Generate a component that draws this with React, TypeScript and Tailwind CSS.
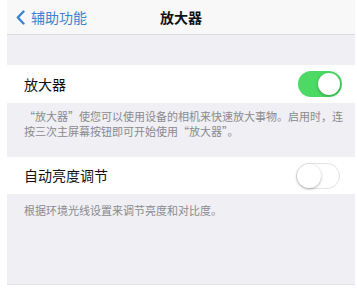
import React from "react";

const font = { fontFamily: '"Noto Sans CJK SC", "Noto Sans", sans-serif' };

const Toggle = ({ on }: { on: boolean }) =>
  on ? (
    <div className="w-[44px] h-[26px] rounded-full bg-[#4cd964] relative">
      <div className="absolute right-[2px] top-[2px] w-[22px] h-[22px] rounded-full bg-white shadow-[0_1px_3px_rgba(0,0,0,0.3)]" />
    </div>
  ) : (
    <div className="w-[44px] h-[26px] rounded-full bg-white border border-[#e3e3e6] relative">
      <div className="absolute left-0 top-0 w-[24px] h-[24px] rounded-full bg-white shadow-[0_1px_3px_rgba(0,0,0,0.3)]" />
    </div>
  );

export default function App() {
  return (
    <div className="w-[357px] h-[289px] bg-white pl-[7px] pr-[2px] pb-[4px]" style={font}>
      <div className="h-full flex flex-col bg-[#efeff4]">
        <div className="relative h-[35px] shrink-0 bg-[#f8f8f8] border-b border-[#dcdce0] flex items-center justify-center">
          <div className="absolute left-[9px] top-0 h-full flex items-center gap-[6px] text-[#3a84d2]">
            <svg width="9" height="15" viewBox="0 0 9 15">
              <path d="M7.5 1.5 L1.8 7.5 L7.5 13.5" fill="none" stroke="currentColor" strokeWidth="2.4" strokeLinecap="round" strokeLinejoin="round" />
            </svg>
            <span className="text-[14px] leading-none">辅助功能</span>
          </div>
          <span className="text-[14px] font-bold text-[#111] leading-none">放大器</span>
        </div>

        <div className="h-[30px] shrink-0" />

        <div className="h-[38px] shrink-0 bg-white flex items-center justify-between pl-[17px] pr-[13px]">
          <span className="text-[14px] text-[#111]">放大器</span>
          <Toggle on />
        </div>

        <div className="h-[54px] shrink-0 pl-[17px] pr-[10px] pt-[6px] text-[11px] leading-[15px] text-[#8a8a8f] whitespace-nowrap">
          “放大器”使您可以使用设备的相机来快速放大事物。启用时，连
          <br />
          按三次主屏幕按钮即可开始使用“放大器”。
        </div>

        <div className="h-[37px] shrink-0 bg-white flex items-center justify-between pl-[17px] pr-[15px]">
          <span className="text-[14px] text-[#111]">自动亮度调节</span>
          <Toggle on={false} />
        </div>

        <div className="flex-1 pl-[17px] pt-[9px] text-[11px] leading-[15px] text-[#8a8a8f] border-b border-[#e2e2e6]">
          根据环境光线设置来调节亮度和对比度。
        </div>
      </div>
    </div>
  );
}
